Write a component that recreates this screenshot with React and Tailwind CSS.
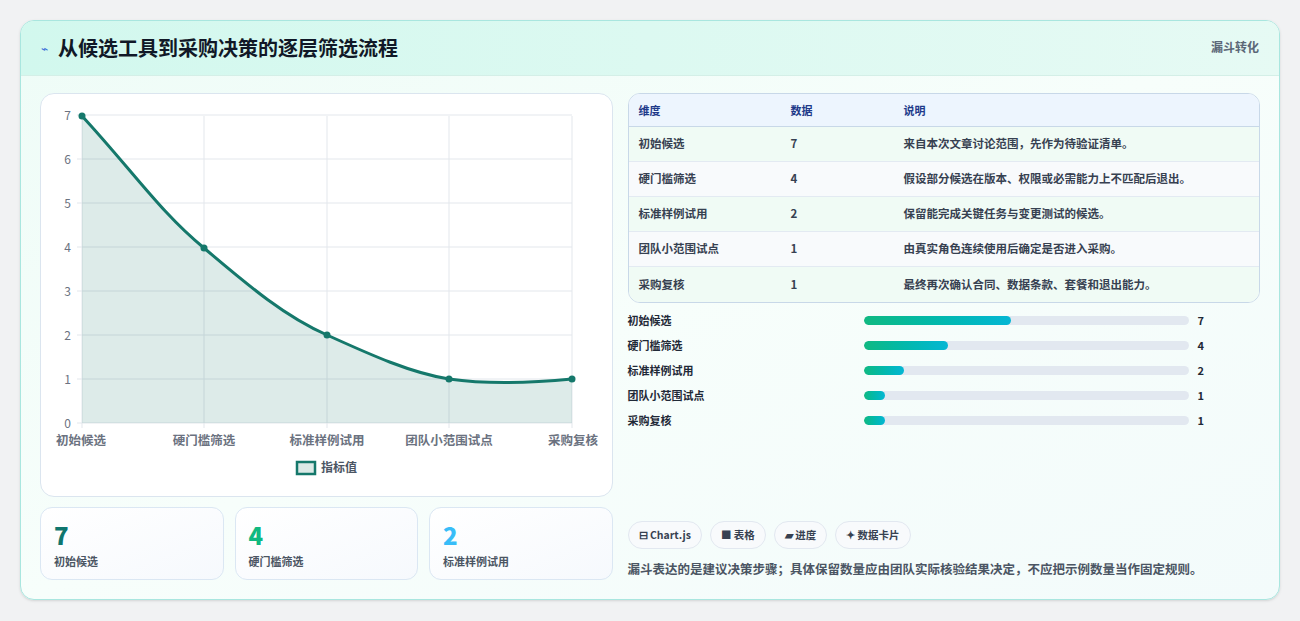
export default function App() {
  const ys = [0,1,2,3,4,5,6,7];
  const xs = [81,203,326,448,571];
  const labels = ["初始候选","硬门槛筛选","标准样例试用","团队小范围试点","采购复核"];
  const rows = [
    ["初始候选","7","来自本次文章讨论范围，先作为待验证清单。"],
    ["硬门槛筛选","4","假设部分候选在版本、权限或必需能力上不匹配后退出。"],
    ["标准样例试用","2","保留能完成关键任务与变更测试的候选。"],
    ["团队小范围试点","1","由真实角色连续使用后确定是否进入采购。"],
    ["采购复核","1","最终再次确认合同、数据条款、套餐和退出能力。"],
  ];
  const bars = [["初始候选",7,45.5],["硬门槛筛选",4,26],["标准样例试用",2,12.6],["团队小范围试点",1,6.5],["采购复核",1,6.5]];
  const pts = [[81,115],[203,247],[326,334],[448,378],[571,378]];
  const curve = "M81,115 C130,168 160,212 203,247 C250,287 285,316 326,334 C370,354 410,372 448,378 C490,384 530,382 571,378";
  return (
    <div className="w-[1300px] h-[621px] bg-[#f1f2f3] pt-[20px] pl-[20px]" style={{fontFamily:'"Noto Sans CJK SC","Noto Sans",sans-serif'}}>
      <div className="w-[1260px] h-[580px] rounded-[14px] border border-[#a9e6df] bg-gradient-to-br from-[#eefcf7] via-[#f7fefb] to-[#f3fbfb] overflow-hidden shadow-sm">
        <div className="h-[55px] flex items-center justify-between px-[20px] bg-gradient-to-r from-[#d2f8ee] to-[#e6faf4] border-b border-[#d4efe7]">
          <div className="flex items-center gap-[10px]">
            <span className="text-[12px] text-[#3b6fd8]">⌁</span>
            <span className="text-[20px] font-bold text-[#111827]">从候选工具到采购决策的逐层筛选流程</span>
          </div>
          <span className="text-[12px] font-bold text-[#5b6777] self-start mt-[17px]">漏斗转化</span>
        </div>
        <div className="flex gap-[15px] px-[19px] pt-[17px]">
          <div className="w-[573px] flex flex-col gap-[10px]">
            <div className="relative h-[404px] rounded-[14px] border border-[#dbe5ef] bg-white">
              <svg width="573" height="404" className="absolute left-0 top-0" viewBox="40 93 573 404">
                {ys.map(v => { const y = 422 - v*44; return (
                  <g key={v}>
                    <line x1="76" x2="571" y1={y} y2={y} stroke="#e3e7ec" />
                    <text x="70" y={y+5} textAnchor="end" fontSize="12" fill="#6b7280">{v}</text>
                  </g>);})}
                {xs.map((x,i) => (
                  <g key={x}>
                    <line x1={x} x2={x} y1="115" y2="427" stroke="#e3e7ec" />
                    <text x={i===0?55:i===4?597:x} y="444" textAnchor={i===0?"start":i===4?"end":"middle"} fontSize="12.5" fill="#6b7280" fontWeight="600">{labels[i]}</text>
                  </g>))}
                <path d={curve + " L571,422 L81,422 Z"} fill="#1a7a6e" fillOpacity="0.15" />
                <path d={curve} fill="none" stroke="#15786b" strokeWidth="3" />
                {pts.map(([x,y]) => <circle key={x} cx={x} cy={y} r="3.5" fill="#15786b" />)}
                <rect x="296" y="461" width="18" height="12" fill="#dbe9e6" stroke="#15786b" strokeWidth="2.5" />
                <text x="320" y="471" fontSize="12" fill="#4b5563" fontWeight="600">指标值</text>
              </svg>
            </div>
            <div className="grid grid-cols-3 gap-[11px]">
              {[["7","text-[#0f766e]","初始候选"],["4","text-[#10b981]","硬门槛筛选"],["2","text-[#38bdf8]","标准样例试用"]].map(([n,c,l]) => (
                <div key={l} className="h-[73px] rounded-[12px] border border-[#dbe7f3] bg-gradient-to-br from-white to-[#f6f9fd] px-[13px] pt-[12px]">
                  <div className={`text-[24px] leading-[30px] font-extrabold ${c}`}>{n}</div>
                  <div className="text-[11px] text-[#4b5563] mt-[3px] font-semibold">{l}</div>
                </div>))}
            </div>
          </div>
          <div className="w-[633px] flex flex-col">
            <div className="rounded-[12px] border border-[#c8d8e8] overflow-hidden bg-white">
              <div className="h-[33px] flex items-center bg-[#edf5fe] border-b border-[#c8d8e8] text-[11px] font-bold text-[#1e3a8a]">
                <div className="w-[162px] pl-[10px]">维度</div><div className="w-[113px]">数据</div><div>说明</div>
              </div>
              {rows.map((r,i) => (
                <div key={i} className={`h-[35px] flex items-center text-[11.5px] font-semibold text-[#374151] ${i<4?"border-b border-[#e3eaf2]":""} ${i%2===0?"bg-[#f0fbf5]":"bg-[#f8fafc]"}`}>
                  <div className="w-[162px] pl-[10px]">{r[0]}</div><div className="w-[113px]">{r[1]}</div><div>{r[2]}</div>
                </div>))}
            </div>
            <div className="mt-[9px] flex flex-col gap-[9px]">
              {bars.map(([l,v,p]) => (
                <div key={l} className="h-[16px] flex items-center text-[11px] font-bold text-[#1f2937]">
                  <div className="w-[236px]">{l}</div>
                  <div className="w-[325px] h-[9px] rounded-full bg-[#e2e8f0] overflow-hidden">
                    <div className="h-full rounded-full bg-gradient-to-r from-[#10b981] to-[#06b6d4]" style={{width:p+"%"}} />
                  </div>
                  <div className="ml-[9px]">{v}</div>
                </div>))}
            </div>
            <div className="mt-[93px] flex gap-[8px]">
              {["⊟ Chart.js","■ 表格","▰ 进度","✦ 数据卡片"].map(t => (
                <span key={t} className="h-[28px] px-[10px] rounded-full border border-[#e2e8f0] bg-[#f8fafc] text-[10.5px] font-bold text-[#374151] flex items-center">{t}</span>))}
            </div>
            <div className="mt-[11px] text-[12.5px] font-semibold text-[#4b5563]">漏斗表达的是建议决策步骤；具体保留数量应由团队实际核验结果决定，不应把示例数量当作固定规则。</div>
          </div>
        </div>
      </div>
    </div>
  );
}
